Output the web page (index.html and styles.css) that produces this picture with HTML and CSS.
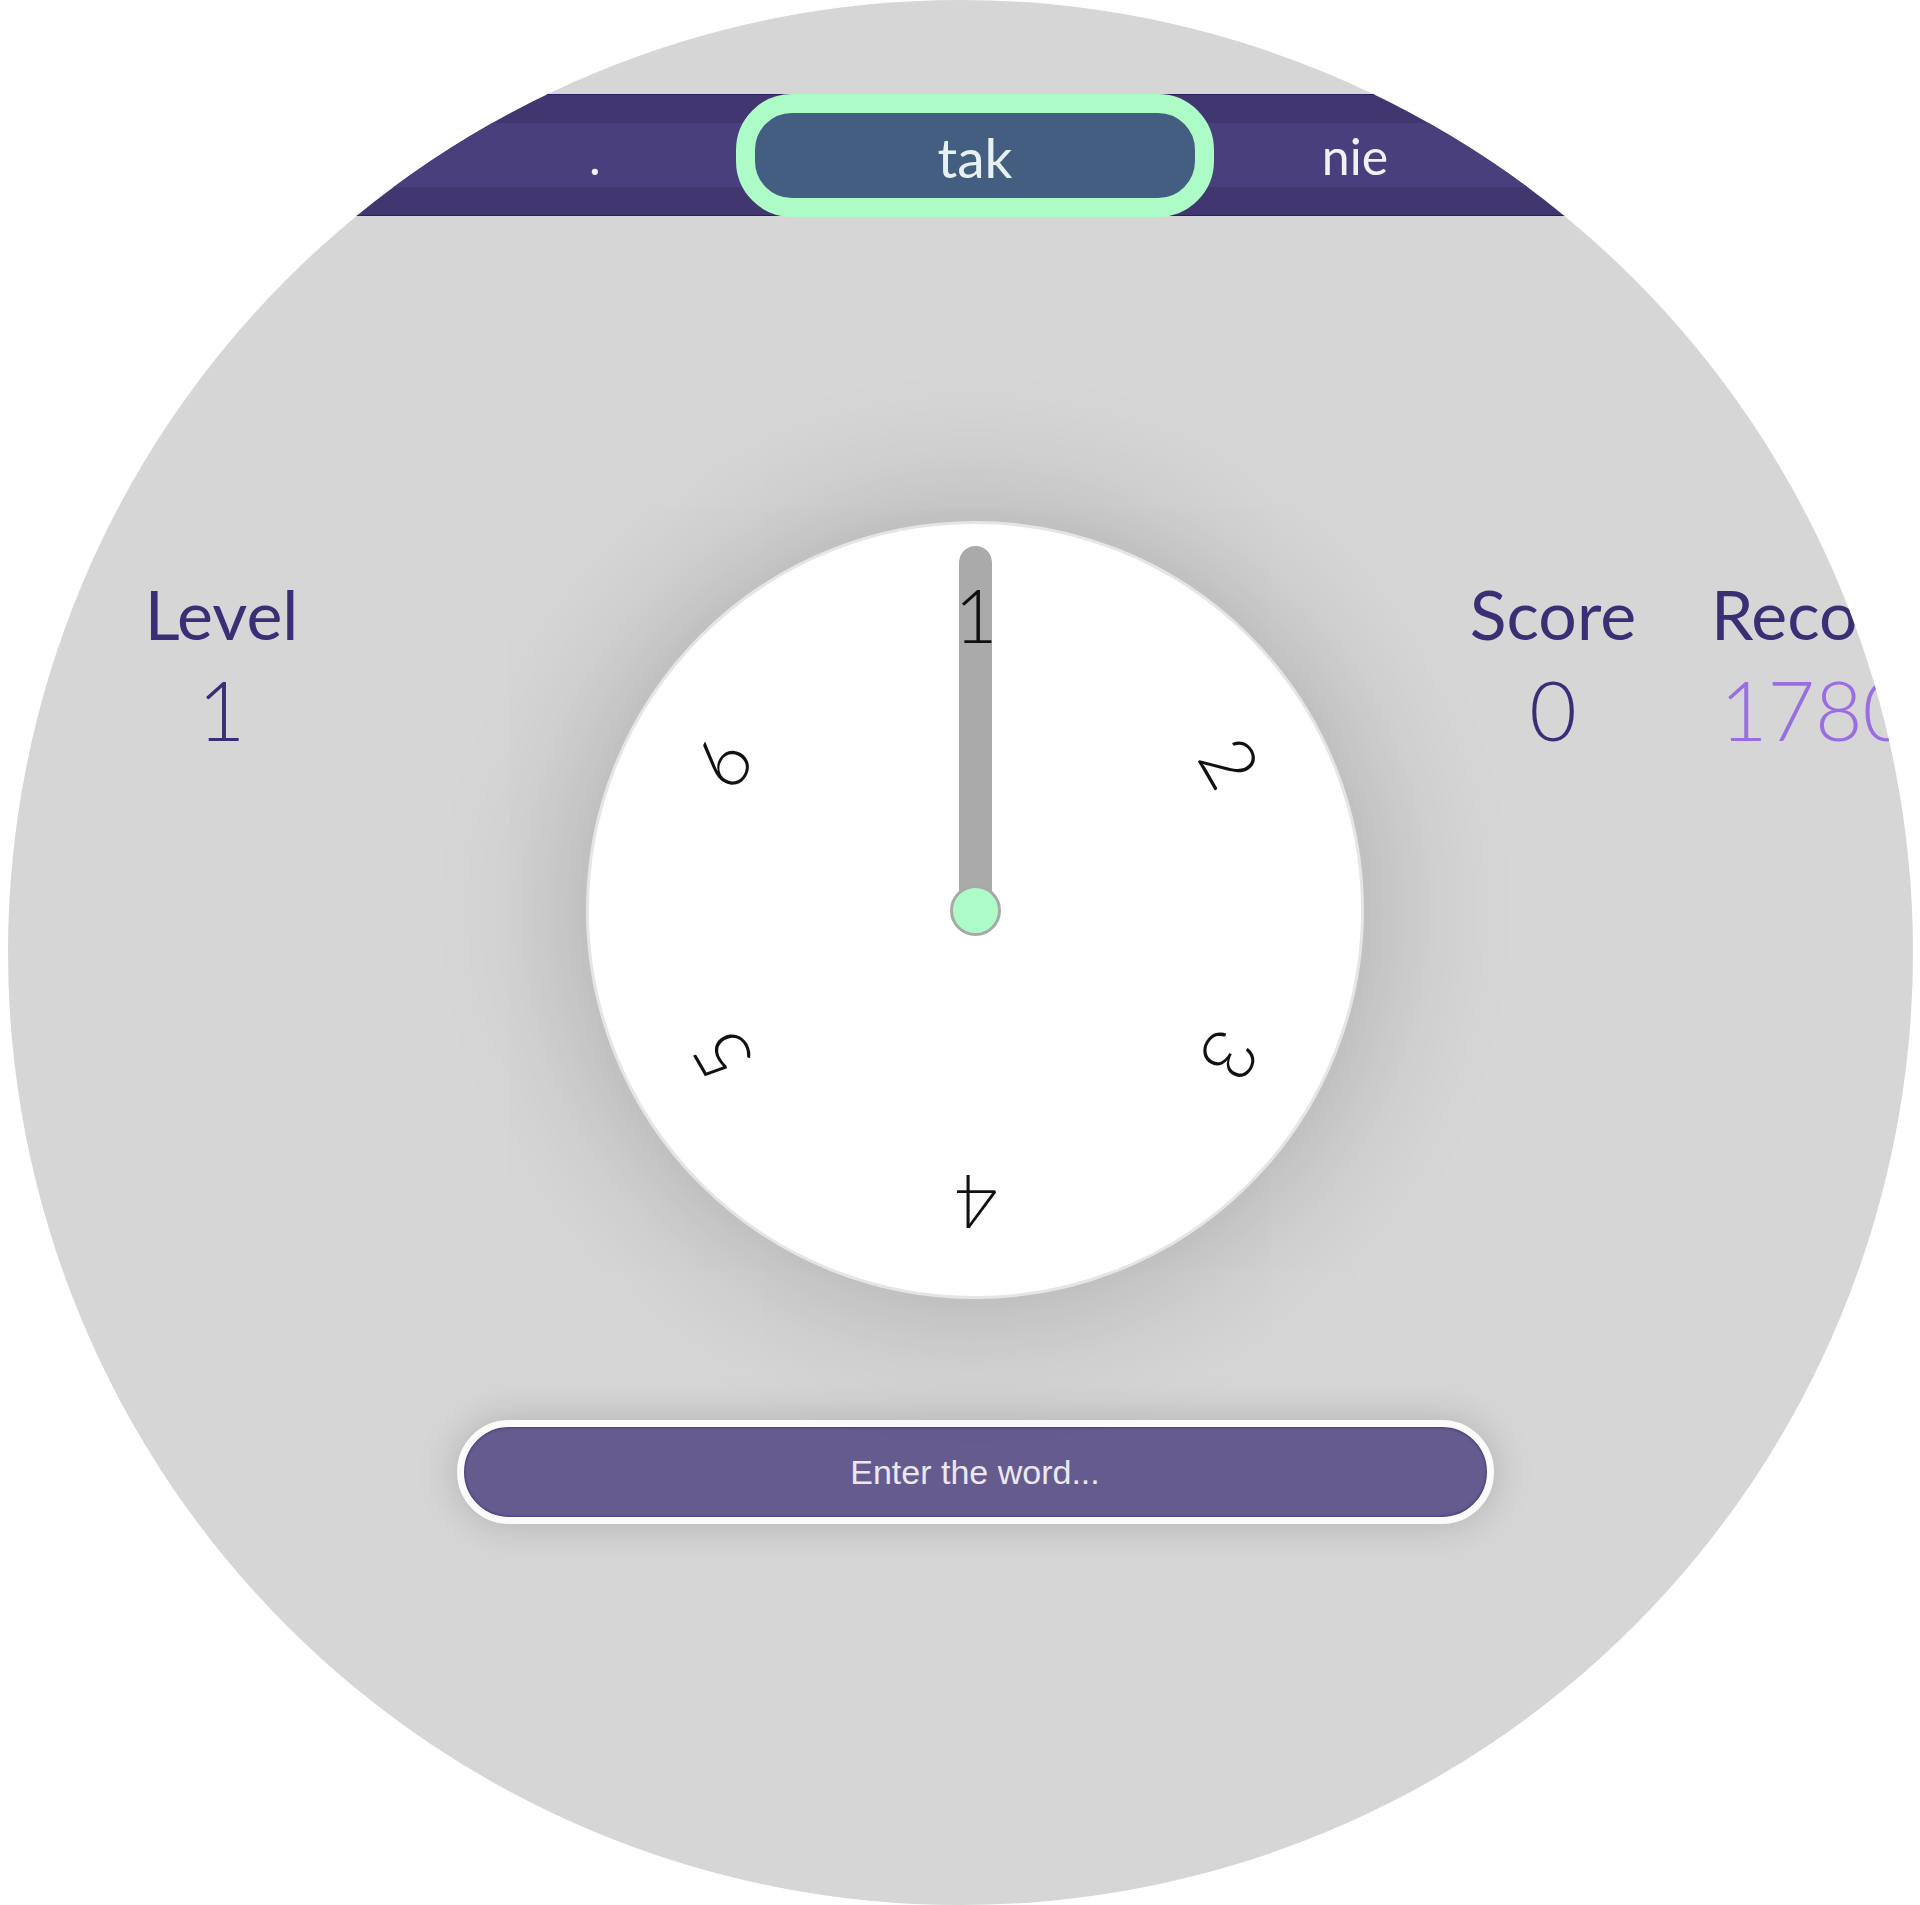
FILE: index.html
```html
<!DOCTYPE html>
<html lang="en">
<head>
<meta charset="utf-8">
<title>Word Clock</title>
<link rel="stylesheet" href="styles.css">
</head>
<body>
<div class="stage">
  <div class="wordbar">
    <div class="words">
      <div class="word">.</div>
      <div class="word active"><div class="pill">tak</div></div>
      <div class="word">nie</div>
    </div>
  </div>

  <div class="main">
    <div class="side side-left">
      <div class="stat stat-level">
        <div class="label">Level</div>
        <div class="value">1</div>
      </div>
    </div>

    <div class="clock">
      <div class="hand"></div>
      <div class="num n1">1</div>
      <div class="num n2">2</div>
      <div class="num n3">3</div>
      <div class="num n4">4</div>
      <div class="num n5">5</div>
      <div class="num n6">6</div>
      <div class="hub"></div>
    </div>

    <div class="side side-right">
      <div class="stat stat-score">
        <div class="label">Score</div>
        <div class="value">0</div>
      </div>
      <div class="stat stat-record">
        <div class="label">Record</div>
        <div class="value record">1780</div>
      </div>
    </div>
  </div>

  <div class="entry">
    <input class="word-input" type="text" placeholder="Enter the word...">
  </div>
</div>
</body>
</html>
```

FILE: styles.css
```css
html, body {
  margin: 0;
  padding: 0;
  background: #ffffff;
}

body {
  font-family: "Lato", "Noto Sans", sans-serif;
}

.stage {
  width: 1905px;
  height: 1905px;
  margin: 0 auto;
  border-radius: 50%;
  overflow: hidden;
  background: #d6d6d6;
  box-sizing: border-box;
  padding-left: 30px;
}

/* ---------- word carousel ---------- */
.wordbar {
  margin-top: 94px;
  margin-left: -30px;
  padding-left: 30px;
  background: #41366f;
  border-top: 1px solid #2c1e62;
  border-bottom: 1px solid #2c1e62;
  padding-top: 28px;
  padding-bottom: 28px;
}

.words {
  height: 64px;
  background: #4a3f7d;
  display: flex;
  justify-content: center;
  align-items: center;
}

.word {
  flex: none;
  width: 380px;
  display: flex;
  justify-content: center;
  align-items: center;
  color: #f1f0f6;
  font-size: 50px;
  line-height: 50px;
  padding-top: 1px;
}

.word.active {
  padding-top: 0;
}

.pill {
  flex: none;
  width: 478px;
  height: 123px;
  box-sizing: border-box;
  border: 19px solid #adfcc8;
  border-radius: 56px;
  background: #435e80;
  color: #e6f1f0;
  font-size: 55px;
  line-height: 55px;
  display: flex;
  justify-content: center;
  align-items: center;
  padding-top: 5px;
}

/* ---------- main row ---------- */
.main {
  margin-top: 305px;
  display: grid;
  grid-template-columns: minmax(0, 1fr) 778px minmax(0, 1fr);
  align-items: start;
}

.side {
  min-width: 0;
  display: flex;
  margin-top: 59px;
}

.side-left {
  padding-left: 104px;
}

.side-right {
  padding-left: 99px;
  gap: 52px;
}

.stat {
  flex: none;
  display: flex;
  flex-direction: column;
  align-items: center;
  color: #3b2e74;
}

.stat-level { width: 160px; }
.stat-score { width: 180px; }
.stat-record { width: 240px; }

.label {
  font-size: 68px;
  line-height: 68px;
  white-space: nowrap;
}

.value {
  font-size: 82px;
  line-height: 82px;
  font-weight: 300;
  margin-top: 20px;
  white-space: nowrap;
}

.value.record {
  color: #9a6ee2;
}

/* ---------- clock ---------- */
.clock {
  position: relative;
  width: 778px;
  height: 778px;
  box-sizing: border-box;
  border: 3px solid #e5e5e5;
  border-radius: 50%;
  background: #ffffff;
  box-shadow: 0 0 150px rgba(0, 0, 0, 0.22);
}

.hand {
  position: absolute;
  left: 50%;
  bottom: 50%;
  width: 33px;
  height: 364px;
  margin-left: -16px;
  border-radius: 17px 17px 0 0;
  background: #aaaaaa;
}

.hub {
  position: absolute;
  left: 50%;
  top: 50%;
  width: 51px;
  height: 51px;
  margin-left: -25px;
  margin-top: -25px;
  box-sizing: border-box;
  border: 3px solid #a8a8a8;
  border-radius: 50%;
  background: #adfcc8;
}

.num {
  position: absolute;
  left: 50%;
  top: 50%;
  width: 100px;
  height: 80px;
  margin-left: -49px;
  margin-top: -41px;
  text-align: center;
  font-size: 74px;
  line-height: 80px;
  font-weight: 300;
  color: #111111;
}

.n1 { transform: rotate(0deg) translateY(-294px); }
.n2 { transform: rotate(60deg) translateY(-294px); }
.n3 { transform: rotate(120deg) translateY(-294px); }
.n4 { transform: rotate(180deg) translateY(-294px); }
.n5 { transform: rotate(240deg) translateY(-294px); }
.n6 { transform: rotate(300deg) translateY(-294px); }

/* ---------- input ---------- */
.entry {
  margin-top: 121px;
  display: flex;
  justify-content: center;
}

.word-input {
  width: 1037px;
  height: 104px;
  box-sizing: border-box;
  border: 7px solid #fbfbfb;
  border-radius: 52px;
  background: #655b8f;
  box-shadow: 0 0 40px rgba(0, 0, 0, 0.18), inset 0 0 3px rgba(40, 25, 100, 0.9);
  outline: none;
  text-align: center;
  font-family: "Liberation Sans", Arial, sans-serif;
  font-size: 34px;
  color: #eeeaf5;
  padding: 0 20px;
}

.word-input::placeholder {
  color: #ebe8f2;
  opacity: 1;
}
```
